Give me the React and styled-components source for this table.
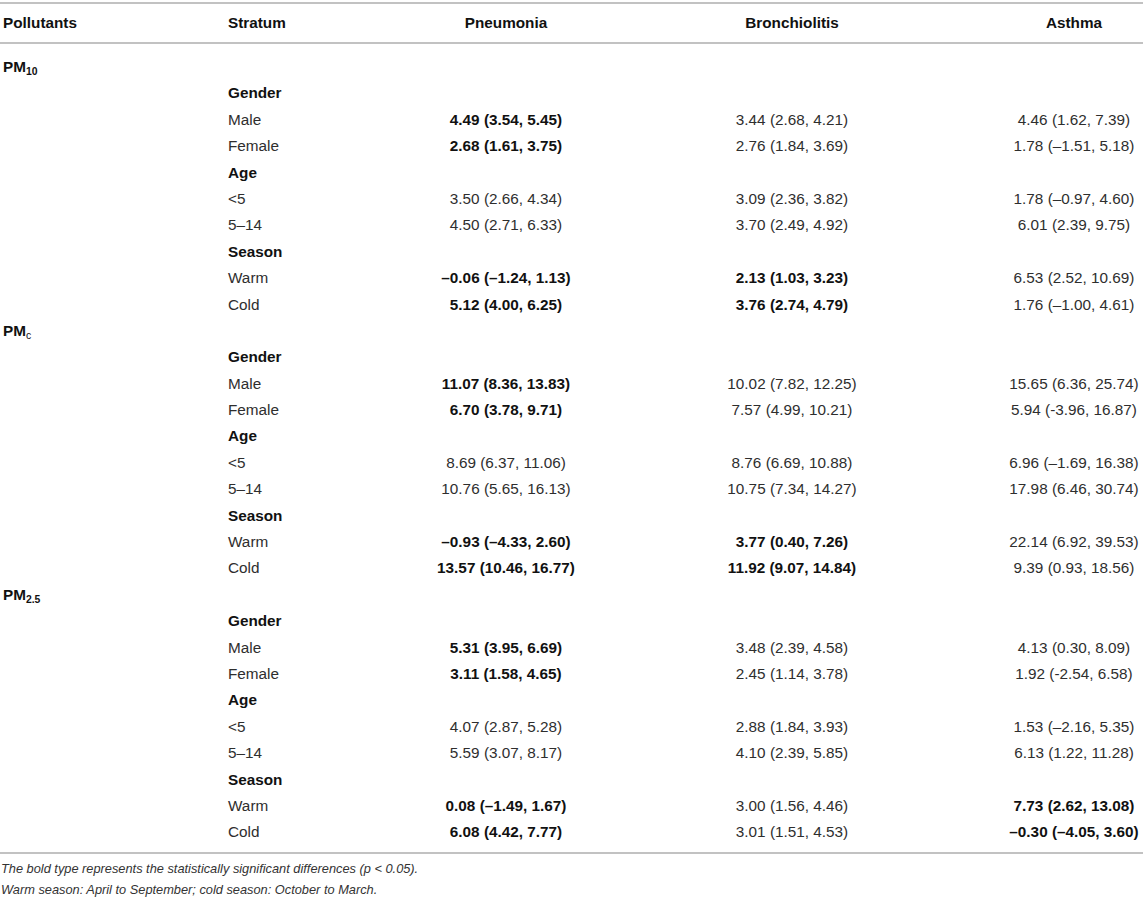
import React from "react";
import styled, { createGlobalStyle } from "styled-components";

const Global = createGlobalStyle`
  html, body { margin: 0; padding: 0; background: #fff; }
  body { font-family: "Liberation Sans", Arial, Helvetica, sans-serif; color: #222; }
`;

const COLS = "228px 205px 146px 426px 138px";

const Wrap = styled.div`
  width: 1143px;
  padding-top: 2px;
`;

const Table = styled.div`
  border-top: 2px solid #c2c2c2;
  border-bottom: 2px solid #c2c2c2;
`;

const HeadRow = styled.div`
  display: grid;
  grid-template-columns: ${COLS};
  height: 38px;
  align-items: center;
  border-bottom: 2px solid #c2c2c2;
  font-size: 15.3px;
  font-weight: 700;
  color: #111;
`;

const Body = styled.div`
  padding: 10px 0 6px;
`;

const Row = styled.div`
  display: grid;
  grid-template-columns: ${COLS};
  height: 26.4px;
  line-height: 26.4px;
  font-size: 15.3px;
`;

const Cell = styled.div`
  padding-left: ${(p) => (p.$first ? "3px" : "0")};
  text-align: ${(p) => (p.$center ? "center" : "left")};
  font-weight: ${(p) => (p.$bold ? 700 : 400)};
  color: ${(p) => (p.$bold ? "#111" : "#2e2e2e")};
  white-space: nowrap;
`;

const Sub = styled.sub`
  font-size: 0.68em;
  vertical-align: -0.3em;
  line-height: 0;
  font-weight: ${(p) => (p.$light ? 400 : 700)};
`;

const Notes = styled.div`
  padding-top: 4px;
  padding-left: 1px;
  font-size: 12.8px;
  line-height: 21px;
  font-style: italic;
  color: #333;
`;

const data = [
  {
    name: <>PM<Sub>10</Sub></>,
    groups: [
      ["Gender", [
        ["Male", ["4.49 (3.54, 5.45)", true], ["3.44 (2.68, 4.21)"], ["4.46 (1.62, 7.39)"]],
        ["Female", ["2.68 (1.61, 3.75)", true], ["2.76 (1.84, 3.69)"], ["1.78 (–1.51, 5.18)"]],
      ]],
      ["Age", [
        ["<5", ["3.50 (2.66, 4.34)"], ["3.09 (2.36, 3.82)"], ["1.78 (–0.97, 4.60)"]],
        ["5–14", ["4.50 (2.71, 6.33)"], ["3.70 (2.49, 4.92)"], ["6.01 (2.39, 9.75)"]],
      ]],
      ["Season", [
        ["Warm", ["–0.06 (–1.24, 1.13)", true], ["2.13 (1.03, 3.23)", true], ["6.53 (2.52, 10.69)"]],
        ["Cold", ["5.12 (4.00, 6.25)", true], ["3.76 (2.74, 4.79)", true], ["1.76 (–1.00, 4.61)"]],
      ]],
    ],
  },
  {
    name: <>PM<Sub $light>c</Sub></>,
    groups: [
      ["Gender", [
        ["Male", ["11.07 (8.36, 13.83)", true], ["10.02 (7.82, 12.25)"], ["15.65 (6.36, 25.74)"]],
        ["Female", ["6.70 (3.78, 9.71)", true], ["7.57 (4.99, 10.21)"], ["5.94 (-3.96, 16.87)"]],
      ]],
      ["Age", [
        ["<5", ["8.69 (6.37, 11.06)"], ["8.76 (6.69, 10.88)"], ["6.96 (–1.69, 16.38)"]],
        ["5–14", ["10.76 (5.65, 16.13)"], ["10.75 (7.34, 14.27)"], ["17.98 (6.46, 30.74)"]],
      ]],
      ["Season", [
        ["Warm", ["–0.93 (–4.33, 2.60)", true], ["3.77 (0.40, 7.26)", true], ["22.14 (6.92, 39.53)"]],
        ["Cold", ["13.57 (10.46, 16.77)", true], ["11.92 (9.07, 14.84)", true], ["9.39 (0.93, 18.56)"]],
      ]],
    ],
  },
  {
    name: <>PM<Sub>2.5</Sub></>,
    groups: [
      ["Gender", [
        ["Male", ["5.31 (3.95, 6.69)", true], ["3.48 (2.39, 4.58)"], ["4.13 (0.30, 8.09)"]],
        ["Female", ["3.11 (1.58, 4.65)", true], ["2.45 (1.14, 3.78)"], ["1.92 (-2.54, 6.58)"]],
      ]],
      ["Age", [
        ["<5", ["4.07 (2.87, 5.28)"], ["2.88 (1.84, 3.93)"], ["1.53 (–2.16, 5.35)"]],
        ["5–14", ["5.59 (3.07, 8.17)"], ["4.10 (2.39, 5.85)"], ["6.13 (1.22, 11.28)"]],
      ]],
      ["Season", [
        ["Warm", ["0.08 (–1.49, 1.67)", true], ["3.00 (1.56, 4.46)"], ["7.73 (2.62, 13.08)", true]],
        ["Cold", ["6.08 (4.42, 7.77)", true], ["3.01 (1.51, 4.53)"], ["–0.30 (–4.05, 3.60)", true]],
      ]],
    ],
  },
];

export default function App() {
  return (
    <Wrap>
      <Global />
      <Table>
        <HeadRow>
          <Cell $first $bold>Pollutants</Cell>
          <Cell $bold>Stratum</Cell>
          <Cell $bold $center>Pneumonia</Cell>
          <Cell $bold $center>Bronchiolitis</Cell>
          <Cell $bold $center>Asthma</Cell>
        </HeadRow>
        <Body>
          {data.map((p, i) => (
            <React.Fragment key={i}>
              <Row>
                <Cell $first $bold>{p.name}</Cell>
              </Row>
              {p.groups.map(([g, rows]) => (
                <React.Fragment key={g}>
                  <Row>
                    <Cell />
                    <Cell $bold>{g}</Cell>
                  </Row>
                  {rows.map(([label, ...vals]) => (
                    <Row key={label}>
                      <Cell />
                      <Cell>{label}</Cell>
                      {vals.map(([v, b], k) => (
                        <Cell key={k} $center $bold={!!b}>{v}</Cell>
                      ))}
                    </Row>
                  ))}
                </React.Fragment>
              ))}
            </React.Fragment>
          ))}
        </Body>
      </Table>
      <Notes>
        <div>The bold type represents the statistically significant differences (p &lt; 0.05).</div>
        <div>Warm season: April to September; cold season: October to March.</div>
      </Notes>
    </Wrap>
  );
}
